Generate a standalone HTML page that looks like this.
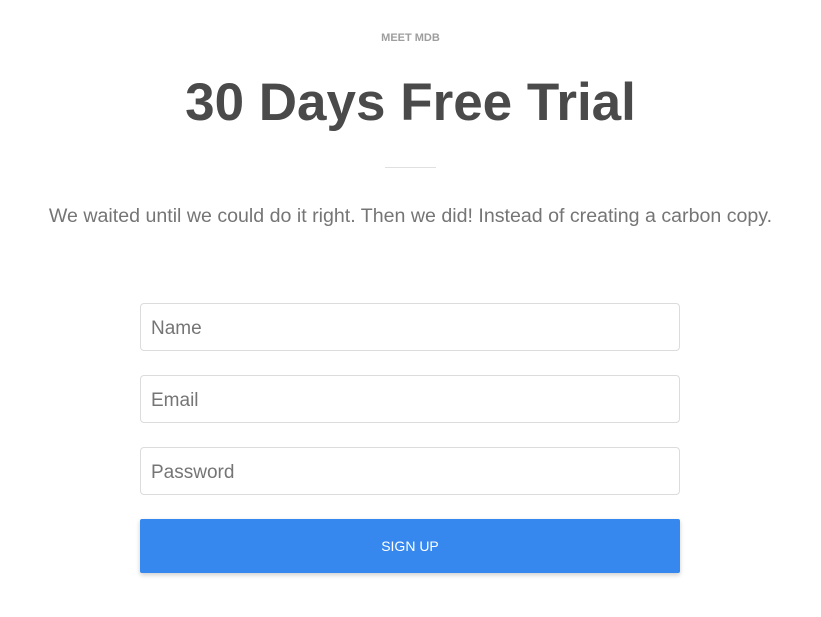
<!DOCTYPE html>
<html><head><style>
body{margin:0;background:#fff;font-family:"Liberation Sans",sans-serif;width:821px;height:617px;overflow:hidden;position:relative}
.t{position:absolute;left:0;width:821px;text-align:center}
.meet{top:32px;font-size:11px;font-weight:bold;color:#9e9e9e}
h1{margin:0;top:71px;font-size:53px;font-weight:bold;color:#4a4a4a;line-height:64px}
.hr{position:absolute;left:385px;top:167px;width:51px;height:1px;background:#e0e0e0}
.p{top:205px;font-size:19.6px;color:#757575;white-space:nowrap}
.in{position:absolute;left:140px;width:540px;height:48px;border:1px solid #dcdcdc;border-radius:4px;font-size:19px;color:#757575;line-height:50px;padding-left:10px;box-sizing:border-box}
.btn{position:absolute;left:140px;top:519px;width:540px;height:54px;background:#3688ee;color:#fff;font-size:14px;text-align:center;line-height:54px;border-radius:2px;box-shadow:0 2px 5px rgba(0,0,0,.2)}
</style></head><body>
<div class="t meet">MEET MDB</div>
<h1 class="t">30 Days Free Trial</h1>
<div class="hr"></div>
<div class="t p">We waited until we could do it right. Then we did! Instead of creating a carbon copy.</div>
<div class="in" style="top:303px">Name</div>
<div class="in" style="top:375px">Email</div>
<div class="in" style="top:447px">Password</div>
<div class="btn">SIGN UP</div>
</body></html>
